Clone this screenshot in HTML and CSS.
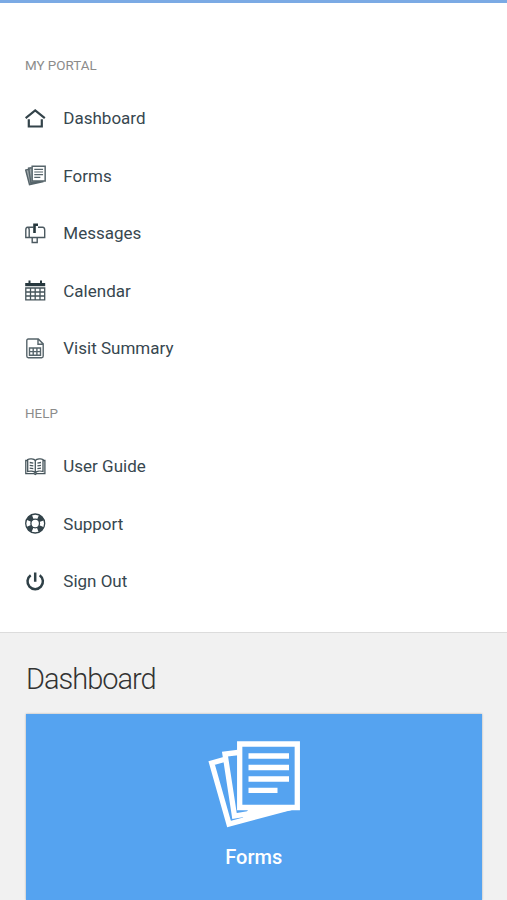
FILE: index.html
```html
<!DOCTYPE html>
<html lang="en">
<head>
  <meta charset="utf-8">
  <title>My Portal - Dashboard</title>
  <link rel="stylesheet" href="styles.css">
</head>
<body>
  <nav class="menu">
    <h2 class="menu-title">MY PORTAL</h2>
    <ul class="menu-list">
      <li><a href="#">
        <svg class="icon" viewBox="0 0 21 21" fill="none" stroke="#33434a" stroke-width="2.200"><path d="M.6 10.100 10.200 2.300l9.600 7.800"/><path d="M3.800 11.200v7.300h13v-7.300"/></svg>
        Dashboard</a></li>
      <li><a href="#">
        <svg class="icon" viewBox="0 0 93 87" fill="none" stroke="#56646a" stroke-width="6.500"><path fill="#a3abae" d="M22 14 3 19 20 84l62-14M30 9 16 11l10 65 42-7"/><path fill="#fff" d="M31.700 3h57.600v65H31.700z"/><path stroke-width="5.500" d="M41 16h39M41 28h39M41 40h39M41 52h27"/></svg>
        Forms</a></li>
      <li><a href="#">
        <svg class="icon" viewBox="0 0 21 21" fill="none" stroke="#4b5960" stroke-width="1.400"><path d="M8.500 4.200H2.500C1.200 4.200.8 5.500.8 7v7.500h18.900V7c0-1.800-.5-2.800-2-2.800H13M4.200 14.500V7c0-1.700-.5-2.800-1.700-2.800M7.200 14.500v5h5v-5"/><path d="M9.500 10V1.700h3.500" stroke="#27383e" stroke-width="2.600"/></svg>
        Messages</a></li>
      <li><a href="#">
        <svg class="icon" viewBox="0 0 21 21" fill="none" stroke="#46555b" stroke-width="1.300"><path fill="#27383e" stroke="none" d="M.2 3h20v3.200H.2z"/><path d="M.8 8v11.800h18.900V8zM.8 12h18.900M.8 16h18.900M5.500 8v11.800M10.200 8v11.800M15 8v11.800"/><path stroke-width="2" stroke="#27383e" d="M4.500.5v4M16 .5v4"/></svg>
        Calendar</a></li>
      <li><a href="#">
        <svg class="icon" viewBox="0 0 21 21" fill="none" stroke="#56646a" stroke-width="1.400"><path d="M3.300 1h10l4.900 4.900v12.200c0 1-.5 1.700-1.500 1.700H3.300c-1 0-1.500-.7-1.500-1.700V2.600C1.800 1.600 2.300 1 3.300 1zM13 1v5.200h5.200"/><path d="M4.500 10h11v7.200h-11zM4.500 13.600h11M8.200 10v7.200M11.900 10v7.200"/></svg>
        Visit Summary</a></li>
    </ul>

    <h2 class="menu-title">HELP</h2>
    <ul class="menu-list">
      <li><a href="#">
        <svg class="icon" viewBox="0 0 21 21" fill="none" stroke="#46555b" stroke-width="1.300"><path d="M10.300 4.500C9 2.700 4.500 2.500 2.700 3.500v12c2.300-.8 6-.5 7.600 1.200 1.700-1.700 5.400-2 7.700-1.200v-12c-1.800-1-6.200-.8-7.700 1zM10.300 4.500V17"/><path d="M2.700 4.500H.8v13.200h8.300l1.200.7 1.200-.7h8.400V4.500H18M4.700 6.500l3.600.6M4.700 9.300l3.600.6M4.700 12.100l3.600.5M16 6.500l-3.600.6M16 9.300l-3.600.6M16 12.100l-3.600.5"/></svg>
        User Guide</a></li>
      <li><a href="#">
        <svg class="icon" viewBox="0 0 21 21" fill="none" stroke="#33434a"><circle cx="10.200" cy="10.500" r="9.500" stroke-width="1.300"/><circle cx="10.200" cy="10.500" r="4.300" stroke-width="1.300"/><circle cx="10.200" cy="10.500" r="7" stroke-width="5.200" stroke-dasharray="5.500 5.496" stroke-dashoffset="-2.750"/></svg>
        Support</a></li>
      <li><a href="#">
        <svg class="icon" viewBox="0 0 21 21" fill="none" stroke="#2f4047" stroke-width="2.500"><path d="M5.700 4.300a7.700 7.700 0 1 0 9 0M10.200 1.500v9.200"/></svg>
        Sign Out</a></li>
    </ul>
  </nav>

  <main class="content">
    <h1>Dashboard</h1>
    <a href="#" class="tile">
      <svg class="tile-icon" viewBox="-1 0 93 87" fill="none" stroke="#fff" stroke-width="5.300"><path d="M17 18.200 3.700 22 21 83l62-16.500"/><path d="M30 11.500 17 13l9.500 62L68 68"/><path fill="#fff" stroke="none" d="M34 78 40 69h44z"/><path d="M31.700 3h57.600v63.500H31.700z"/><path d="M40.500 15h40.500M40.500 26.500h40.500M40.500 38h40.500M40.500 49.300h29"/></svg>
      <span>Forms</span>
    </a>
  </main>
</body>
</html>
```

FILE: styles.css
```css
body {
  margin: 0;
  height: 900px;
  overflow: hidden;
  background-color: #f1f1f1;
  color: #37474f;
  font-family: Roboto, sans-serif;
}

a {
  color: inherit;
  text-decoration: none;
}

.menu {
  box-sizing: border-box;
  height: 633px;
  padding-top: 26px;
  background-color: #fff;
  border-top: 3px solid #7baae4;
  border-bottom: 1px solid #dcdcdc;
}

.menu-title {
  margin: 0;
  padding: 27px 25px 13.500px;
  color: #8b8b8b;
  font-size: 13.400px;
  font-weight: 400;
  line-height: 20px;
}

.menu-list {
  list-style: none;
  margin: 0;
  padding: 0;
}

.menu-list a {
  display: flex;
  align-items: center;
  gap: 17.300px;
  height: 57.500px;
  padding-left: 25px;
  font-size: 17px;
}

.icon {
  width: 21px;
  height: 21px;
}

.content {
  height: 267px;
  box-sizing: border-box;
  overflow: hidden;
  padding: 26px 25.500px 0 26px;
}

h1 {
  margin: 0 0 15px;
  color: #333;
  font-size: 29px;
  font-weight: 300;
  letter-spacing: -1px;
  line-height: 40px;
}

.tile {
  box-sizing: border-box;
  display: flex;
  flex-direction: column;
  align-items: center;
  height: 186px;
  padding-top: 27px;
  background-color: #55a3f0;
  box-shadow: 0 0 2px rgba(0, 0, 0, 0.3);
  color: #fff;
  font-size: 20px;
  font-weight: 500;
}

.tile-icon {
  width: 93px;
  height: 87px;
  margin-bottom: 17px;
}
```
